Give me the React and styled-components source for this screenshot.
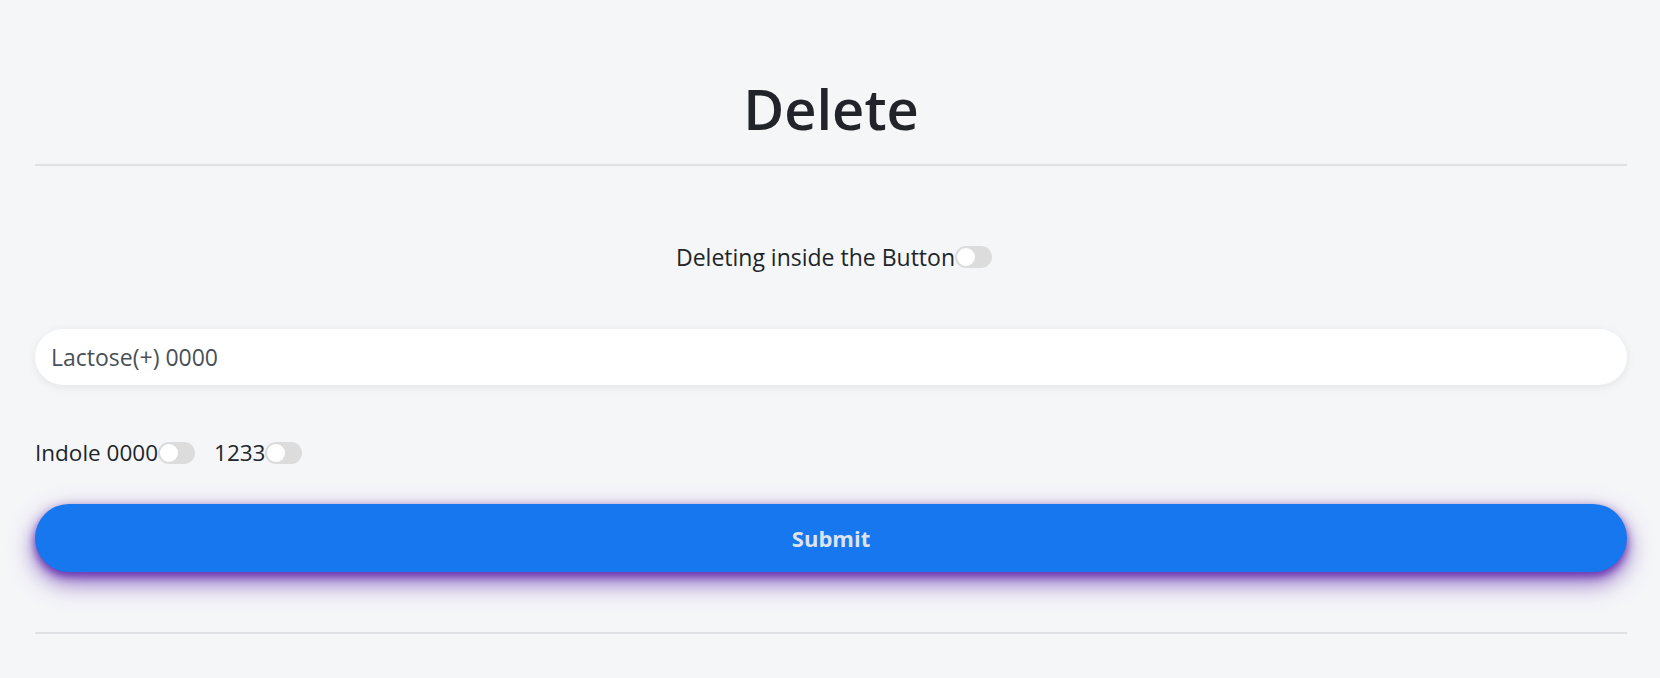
import React, { useState } from "react";
import styled, { createGlobalStyle } from "styled-components";

const GlobalStyle = createGlobalStyle`
  * { box-sizing: border-box; }
  body {
    margin: 0;
    background: #f5f6f8;
    font-family: "Open Sans", "Noto Sans", sans-serif;
    color: #212529;
  }
`;

const Page = styled.div`
  padding: 0 33px 0 35px;
`;

const Title = styled.h1`
  margin: 0;
  padding-top: 68px;
  text-align: center;
  font-size: 56px;
  font-weight: 600;
  line-height: 80px;
  color: #212529;
`;

const Rule = styled.hr`
  margin: ${(p) => p.$top || 0}px 0 0;
  border: none;
  border-top: 2px solid #dfe1e4;
`;

const CenterRow = styled.div`
  display: flex;
  justify-content: center;
  align-items: center;
  margin-top: 78px;
  padding-left: 6px;
  font-size: 23px;
  line-height: 26px;
`;

const Row = styled.div`
  display: flex;
  align-items: center;
  gap: 19px;
  margin-top: 55px;
  font-size: 22.5px;
  line-height: 26px;
`;

const Labelled = styled.label`
  display: flex;
  align-items: center;
`;

const Track = styled.span`
  position: relative;
  display: inline-block;
  width: 37px;
  height: 22px;
  border-radius: 11px;
  background: ${(p) => (p.$on ? "#1677ee" : "#dcdcdc")};
  cursor: pointer;
`;

const Knob = styled.span`
  position: absolute;
  top: 2px;
  left: ${(p) => (p.$on ? "17px" : "2px")};
  width: 18px;
  height: 18px;
  border-radius: 50%;
  background: #fff;
`;

const Input = styled.input`
  display: block;
  width: 100%;
  height: 56px;
  margin-top: 59px;
  padding: 0 16px;
  border: none;
  border-radius: 28px;
  background: #fff;
  box-shadow: 0 2px 10px rgba(0, 0, 0, 0.08);
  font-family: inherit;
  font-size: 23px;
  color: #495057;
  outline: none;
`;

const Submit = styled.button`
  display: block;
  width: 100%;
  height: 68px;
  margin-top: 38px;
  border: none;
  border-radius: 34px;
  background: #1677ee;
  box-shadow: 0 4px 8px rgba(96, 40, 170, 0.85),
    0 10px 24px rgba(98, 45, 175, 0.75);
  font-family: inherit;
  font-size: 22px;
  font-weight: 700;
  color: #dde3ec;
  cursor: pointer;
`;

const Switch = ({ label }) => {
  const [on, setOn] = useState(false);
  return (
    <Labelled onClick={() => setOn(!on)}>
      {label}
      <Track $on={on}>
        <Knob $on={on} />
      </Track>
    </Labelled>
  );
};

export default function App() {
  return (
    <>
      <GlobalStyle />
      <Page>
        <Title>Delete</Title>
        <Rule $top={16} />
        <CenterRow>
          <Switch label="Deleting inside the Button" />
        </CenterRow>
        <Input defaultValue="Lactose(+) 0000" />
        <Row>
          <Switch label="Indole 0000" />
          <Switch label="1233" />
        </Row>
        <Submit>Submit</Submit>
        <Rule $top={60} />
      </Page>
    </>
  );
}
